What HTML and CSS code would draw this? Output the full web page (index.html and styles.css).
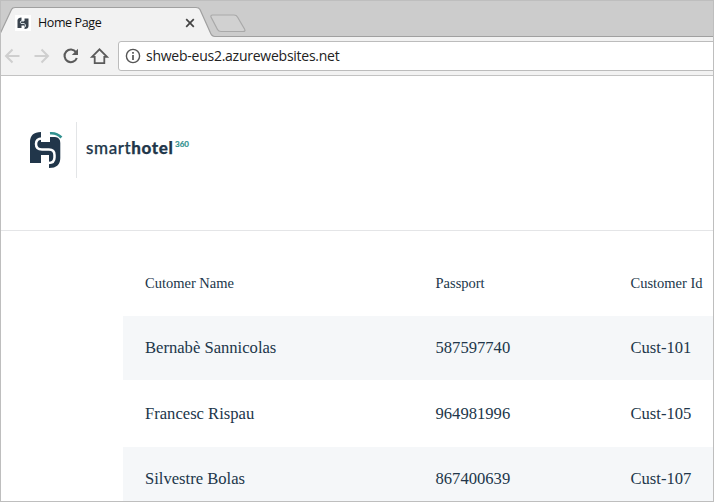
FILE: index.html
```html
<!DOCTYPE html>
<html lang="en">
<head>
<meta charset="utf-8">
<title>Home Page</title>
<link rel="stylesheet" href="styles.css">
</head>
<body>
<div class="window">
  <div class="tabstrip">
    <svg class="tabshape" width="260" height="38" viewBox="0 0 260 38">
      <path d="M0 37V34L11.500 9.500Q12.500 7.500 15 7.500H196Q199 7.500 200 9.500L210.500 33Q212 36.500 215 36.500V38H0Z" fill="#f2f2f2"/>
      <path d="M0 34L11.500 9.500Q12.500 7.500 15 7.500H196Q199 7.500 200 9.500L210.500 33Q212 36.500 215 36.500H260" fill="none" stroke="#a0a0a0" stroke-width="1.200"/>
      <path d="M212.500 15H234Q236.500 15 237.500 17L244.500 29Q246 31.500 243 31.500H221Q218.500 31.500 217.500 29.500L211 17Q210.500 15 212.500 15Z" fill="#d1d1d1" stroke="#a9a9a9" stroke-width="1.200"/>
    </svg>
    <div class="tab">
      <svg class="favicon" width="16" height="16" viewBox="0 0 16 16">
        <rect width="16" height="16" fill="#fff"/>
        <path d="M2.500 13V5Q3 2.500 6.500 2.500V6H9.500V3.500H13.500V11Q13.500 14 9.500 14V10.500H6.500V13Z" fill="#39434d"/>
        <path d="M9 6H6Q4.500 7 6 8.500H9Q11 9 10.500 11.500L9 12.500" fill="none" stroke="#d5dde1" stroke-width="1"/>
      </svg>
      <span class="tabtitle">Home Page</span>
      <svg class="close" width="10" height="10" viewBox="0 0 10 10"><path d="M1.200 1.200L8.800 8.800M8.800 1.200L1.200 8.800" stroke="#444" stroke-width="1.700"/></svg>
    </div>
  </div>
  <div class="toolbar">
    <svg class="nav" width="117" height="37" viewBox="1 37 117 37" fill="none">
      <g stroke="#cfcfcf" stroke-width="2"><path d="M19.500 56H6.500M12.500 49.500L6 56L12.500 62.500M34.500 56H47.500M41.500 49.500L48 56L41.500 62.500"/></g>
      <path d="M76 52.200A6.300 6.300 0 1 0 76.800 58" stroke="#5b5b5b" stroke-width="2.100"/>
      <path d="M78 48.800V55H71.800Z" fill="#5b5b5b"/>
      <path d="M92 56.800L99.500 49.300L107 56.800H104.300V63.200H94.700V56.800Z" stroke="#5b5b5b" stroke-width="1.800"/>
    </svg>
    <div class="address">
      <svg class="info" width="16" height="16" viewBox="0 0 16 16"><circle cx="8" cy="8" r="6.600" fill="none" stroke="#555" stroke-width="1.400"/><path d="M8 7V12M8 4V5.700" stroke="#555" stroke-width="1.700"/></svg>
      <span class="url">shweb-eus2.azurewebsites.net</span>
    </div>
  </div>
  <header class="brand">
    <svg class="mark" width="34" height="38" viewBox="29 131 34 38" fill="none">
      <path d="M30 163V142Q30 132 41 132V142H50V137H55Q60.300 137.500 60.300 143V158Q60.300 168 49 168V155H41V163Z" fill="#21364a"/>
      <path d="M49.500 138.500H42Q36 138.500 36 144T42 149.500H49Q54.500 149.500 54.500 155V157.500Q54.500 163 48.500 163" stroke="#fff" stroke-width="2.500"/>
      <path d="M50 133.300Q57 132.700 61.400 137.500" stroke="#31918f" stroke-width="2.600"/>
    </svg>
    <div class="divider"></div>
    <div class="wordmark">smart<b>hotel</b><span class="sup">360</span></div>
  </header>
  <main class="customers">
    <div class="row head"><span>Cutomer Name</span><span>Passport</span><span>Customer Id</span></div>
    <div class="row shade"><span>Bernabè Sannicolas</span><span>587597740</span><span>Cust-101</span></div>
    <div class="row plain"><span>Francesc Rispau</span><span>964981996</span><span>Cust-105</span></div>
    <div class="row shade"><span>Silvestre Bolas</span><span>867400639</span><span>Cust-107</span></div>
  </main>
</div>
</body>
</html>
```
FILE: styles.css
```css
* { box-sizing: border-box; }
body { margin: 0; }
.window { width: 714px; height: 502px; overflow: hidden; border: 1px solid #bebebe; background: #fff; color: #21364a; }
.tabstrip { position: relative; height: 36px; background: #ccc; border-bottom: 1px solid #a0a0a0; }
.tabshape { position: absolute; left: -1px; top: -1px; }
.tab { position: relative; display: flex; align-items: center; height: 29px; margin: 0 0 0 14px; padding-top: 15px; width: 184px; }
.favicon { flex: none; }
.tabtitle { margin-left: 7px; font: 12.5px/16px "Open Sans", sans-serif; letter-spacing: -0.4px; color: #111; }
.close { margin-left: auto; margin-right: 4px; }
.toolbar { display: flex; height: 39px; background: #f2f2f2; border-bottom: 1px solid #c3c3c3; }
.nav { flex: none; }
.address { flex: 1; display: flex; align-items: center; height: 30px; margin: 4px -4px 0 0; padding-left: 6px; border: 1px solid #bcbcbc; border-radius: 3px; background: #fff; }
.url { margin-left: 5px; font: 14px/20px "Open Sans", sans-serif; letter-spacing: -0.25px; color: #222; }
.brand { display: flex; height: 155px; padding: 46px 0 0 28px; border-bottom: 1px solid #e4e5e7; }
.mark { margin-top: 9px; }
.divider { width: 1px; height: 56px; margin-left: 13px; background: #e3e5e7; }
.wordmark { position: relative; margin: 15px 0 0 9px; font: 500 17px/22px Lato, sans-serif; letter-spacing: 0.6px; -webkit-text-stroke: 0.25px #21364a; }
.wordmark b { font-weight: 900; }
.sup { position: absolute; left: 89px; top: 3px; font: 700 8px/8px Lato, sans-serif; letter-spacing: 0; color: #31918f; -webkit-text-stroke: 0.2px #31918f; }
.customers { margin-left: 122px; font: 16.6px/20px "Liberation Serif", serif; }
.row { display: grid; grid-template-columns: 290.500px 195px 1fr; align-items: center; height: 64px; padding-left: 22px; white-space: nowrap; }
.head { height: 85px; padding-top: 18px; font-size: 14.5px; }
.shade { background: #f5f7f9; }
.plain { height: 67px; }
```
